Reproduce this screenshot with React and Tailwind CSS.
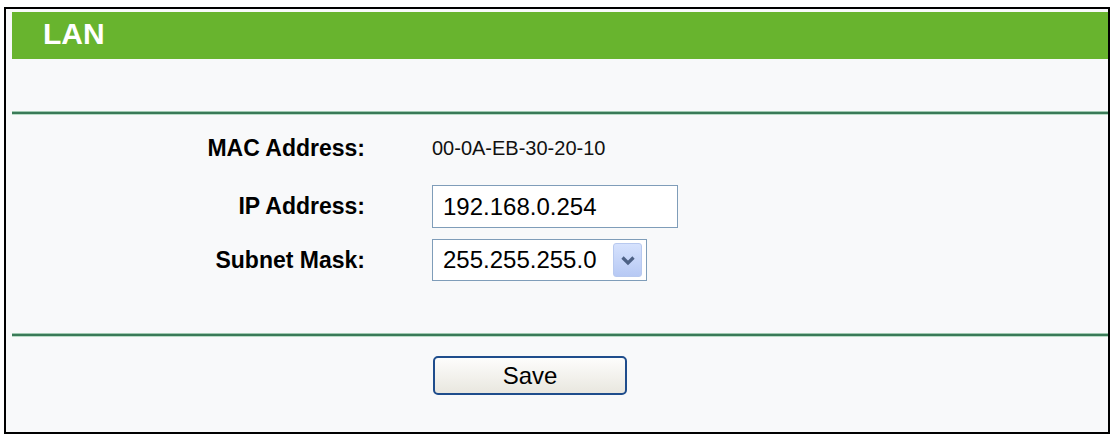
import React from 'react';

function Rule() {
  return (
    <div>
      <div className="h-[1px] bg-[#9fc9b0]" />
      <div className="h-[2px] bg-[#3a7a58]" />
      <div className="h-[1px] bg-[#b9dcc6]" />
    </div>
  );
}

function Row({ label, children, className }) {
  return (
    <div className={'flex items-center ' + className}>
      <div className="w-[353px] text-right text-[23px] font-bold text-black">{label}</div>
      <div className="ml-[67px] flex items-center">{children}</div>
    </div>
  );
}

export default function App() {
  return (
    <div className="bg-white pl-[4px] pt-[7px]" style={{ fontFamily: '"Liberation Sans", Arial, sans-serif' }}>
      <div className="h-[427px] w-[1106px] border-2 border-black bg-[#f8f9fa] pl-[6px] pt-[3px]">
        <div className="flex h-[47px] items-center bg-[#68b42e] pb-[3px] pl-[31px]">
          <span className="text-[30px] font-bold leading-none text-white">LAN</span>
        </div>

        <div className="mt-[52px]">
          <Rule />
        </div>

        <Row label="MAC Address:" className="mt-[15px] h-[36px]">
          <span className="text-[20px] text-[#111]">00-0A-EB-30-20-10</span>
        </Row>

        <Row label="IP Address:" className="mt-[19px] h-[43px]">
          <input
            defaultValue="192.168.0.254"
            className="h-[43px] w-[246px] border border-[#7f9db9] bg-white pl-[10px] text-[24px] text-black outline-none"
          />
        </Row>

        <Row label="Subnet Mask:" className="mt-[11px] h-[42px]">
          <div className="flex h-[42px] w-[215px] items-center justify-between border border-[#7f9db9] bg-white pl-[10px] pr-[4px]">
            <span className="text-[24px] text-black">255.255.255.0</span>
            <div className="flex h-[34px] w-[29px] items-center justify-center rounded-[3px] border border-[#b8c9ef] bg-gradient-to-b from-[#d6e2fd] to-[#b7c9f4]">
              <svg width="16" height="11" viewBox="0 0 16 11">
                <path d="M2.5 2.5 L8 8 L13.5 2.5" fill="none" stroke="#4d6185" strokeWidth="3.2" />
              </svg>
            </div>
          </div>
        </Row>

        <div className="mt-[52px]">
          <Rule />
        </div>

        <div className="mt-[19px] flex">
          <button className="ml-[421px] h-[39px] w-[194px] rounded-[5px] border-2 border-[#1f4d8c] bg-gradient-to-b from-[#fdfdfc] to-[#e9e7df] text-[24px] text-black">
            Save
          </button>
        </div>
      </div>
    </div>
  );
}
